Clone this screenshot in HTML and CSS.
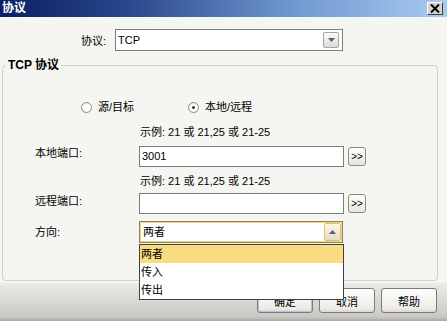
FILE: index.html
```html
<!DOCTYPE html>
<html lang="zh-CN">
<head>
    <meta charset="UTF-8">
    <title>协议</title>
    <link rel="stylesheet" href="styles.css">
</head>
<body>
    <div class="window">
        <div class="titlebar">
            <span class="title">协议</span>
            <span class="close">
                <svg width="10" height="9" viewBox="0 0 10 9"><path d="M1 0.5 L9 8.5 M9 0.5 L1 8.5" stroke="#000" stroke-width="2"/></svg>
            </span>
        </div>
        <div class="body">
            <div class="proto-row">
                <label class="proto-label">协议:</label>
                <div class="combo proto-combo">
                    <span class="combo-value">TCP</span>
                    <span class="combo-btn">
                        <svg width="7" height="4" viewBox="0 0 7 4"><path d="M0 0 H7 L3.5 4 Z" fill="#4d6185"/></svg>
                    </span>
                </div>
            </div>
            <fieldset class="group">
                <legend>TCP 协议</legend>
                <div class="radios">
                    <span class="radio-item"><span class="radio"></span>源/目标</span>
                    <span class="radio-item"><span class="radio checked"></span>本地/远程</span>
                </div>
                <div class="form-grid">
                    <span></span><span class="hint">示例: 21 或 21,25 或 21-25</span><span></span>
                    <label class="field-label">本地端口:</label>
                    <div class="textbox">3001</div>
                    <button class="more">&gt;&gt;</button>
                    <span></span><span class="hint hint-2">示例: 21 或 21,25 或 21-25</span><span></span>
                    <label class="field-label">远程端口:</label>
                    <div class="textbox"></div>
                    <button class="more">&gt;&gt;</button>
                    <label class="field-label dir-label">方向:</label>
                    <div class="combo-wrap">
                        <div class="combo dir-combo">
                            <span class="combo-value">两者</span>
                            <span class="combo-btn up">
                                <svg width="7" height="4" viewBox="0 0 7 4"><path d="M0 4 H7 L3.5 0 Z" fill="#4d6185"/></svg>
                            </span>
                        </div>
                        <ul class="dropdown">
                            <li class="selected">两者</li>
                            <li>传入</li>
                            <li>传出</li>
                        </ul>
                    </div>
                    <span></span>
                </div>
            </fieldset>
        </div>
        <div class="footer">
            <button class="btn default">确定</button>
            <button class="btn">取消</button>
            <button class="btn">帮助</button>
        </div>
    </div>
</body>
</html>
```

FILE: styles.css
```css
html, body {
    margin: 0;
    padding: 0;
}

body {
    font-family: "Liberation Sans", "Noto Sans CJK SC", sans-serif;
    font-size: 11px;
    color: #000;
    background: #f5f5f2;
}

.window {
    width: 447px;
    height: 321px;
    display: flex;
    flex-direction: column;
    background: #f5f5f2;
    overflow: hidden;
}

.titlebar {
    height: 17px;
    display: flex;
    align-items: center;
    justify-content: space-between;
    padding: 0 3px 0 2px;
    background: linear-gradient(to right, #0a1f62 0%, #2c4a8e 30%, #6f97cf 65%, #a9cbf1 100%);
}

.title {
    color: #fff;
    font-weight: bold;
    font-size: 12px;
    line-height: 17px;
}

.close {
    width: 16px;
    height: 13px;
    box-sizing: border-box;
    display: flex;
    align-items: center;
    justify-content: center;
    background: #d6d3cb;
    border: 1px solid;
    border-color: #fff #404040 #404040 #fff;
    margin-right: 1px;
}

.body {
    flex: 1;
    padding: 12px 0 0 0;
}

.proto-row {
    display: flex;
    align-items: center;
}

.proto-label {
    width: 115px;
    box-sizing: border-box;
    padding-left: 81px;
}

/* combo boxes */
.combo {
    box-sizing: border-box;
    display: flex;
    align-items: center;
    justify-content: space-between;
    background: #fff;
    border: 1px solid #7c7c7c;
}

.proto-combo {
    width: 228px;
    height: 22px;
    padding: 0 3px 0 2px;
}

.combo-value {
    line-height: 14px;
}

.combo-btn {
    width: 16px;
    height: 16px;
    box-sizing: border-box;
    display: flex;
    align-items: center;
    justify-content: center;
    border: 1px solid #a5a5a0;
    border-radius: 2px;
    background: linear-gradient(#fbfbf9, #dcdbd5);
}

.group {
    margin: 7px 9px 0 2px;
    padding: 0;
    height: 223px;
    box-sizing: border-box;
    border: 1px solid #cfcfc6;
    border-radius: 4px;
}

.group legend {
    font-weight: bold;
    font-size: 12px;
    line-height: 14px;
    margin-left: 3px;
    padding: 0 2px;
}

.radios {
    display: flex;
    gap: 54px;
    margin: 28px 0 0 78px;
    line-height: 14px;
}

.radio-item {
    display: flex;
    align-items: center;
    gap: 6px;
}

.radio {
    width: 11px;
    height: 11px;
    box-sizing: border-box;
    border-radius: 50%;
    border: 1px solid #8a8a86;
    background: radial-gradient(circle at 60% 60%, #fff 40%, #e4e3dd 100%);
    position: relative;
}

.radio.checked::after {
    content: "";
    position: absolute;
    left: 3px;
    top: 3px;
    width: 3px;
    height: 3px;
    border-radius: 50%;
    background: #333;
}

.form-grid {
    display: grid;
    grid-template-columns: 100px 205px 18px;
    column-gap: 4px;
    margin: 11px 0 0 32px;
    align-items: center;
}

.hint {
    line-height: 14px;
    padding-left: 1px;
}

.hint-2 {
    margin-top: 7px;
}

.field-label {
    line-height: 14px;
}

.textbox {
    box-sizing: border-box;
    height: 21px;
    border: 1px solid #7c7c7c;
    background: #fff;
    padding: 0 2px;
    line-height: 19px;
    margin-top: 7px;
}

.form-grid .textbox:nth-of-type(2) {
    margin-top: 5px;
}

.more {
    box-sizing: border-box;
    width: 18px;
    height: 19px;
    margin-top: 7px;
    padding: 0;
    font: inherit;
    font-size: 10px;
    border: 1px solid #8b8b84;
    border-radius: 3px;
    background: linear-gradient(#ffffff, #e6e5df);
}

.form-grid .more:nth-of-type(2) {
    margin-top: 5px;
}

.dir-label {
    margin-top: 7px;
}

.combo-wrap {
    position: relative;
    margin-top: 7px;
}

.dir-combo {
    width: 204px;
    height: 22px;
    padding: 0 1px 0 1px;
    border-color: #8a8466;
    box-shadow: inset 0 0 0 1px #f3d27a;
}

.dir-combo .combo-value {
    padding-left: 2px;
}

.combo-btn.up {
    width: 17px;
    height: 18px;
    border-color: #d9c07a;
    background: linear-gradient(#fdf8e8, #e6dcc0);
}

.dropdown {
    position: absolute;
    left: 0;
    top: 23px;
    width: 205px;
    margin: 0;
    padding: 0;
    list-style: none;
    box-sizing: border-box;
    background: #fff;
    border: 1px solid #404040;
    z-index: 10;
}

.dropdown li {
    height: 18px;
    line-height: 18px;
    padding-left: 1px;
}

.dropdown li.selected {
    background: #f9dc80;
}

.footer {
    height: 38px;
    display: flex;
    justify-content: flex-end;
    gap: 6px;
    padding: 5px 10px 0 0;
    box-sizing: border-box;
    background: linear-gradient(#ebeae6, #c9c8c3 90%, #a8a7a2);
}

.btn {
    width: 56px;
    height: 25px;
    box-sizing: border-box;
    font: inherit;
    font-size: 11px;
    border: 1px solid #7b7b74;
    border-radius: 3px;
    background: linear-gradient(#ffffff, #ecebe6 85%, #d6d5ce);
}

.btn.default {
    box-shadow: inset 0 0 0 1px #a9c4e6;
}
```
